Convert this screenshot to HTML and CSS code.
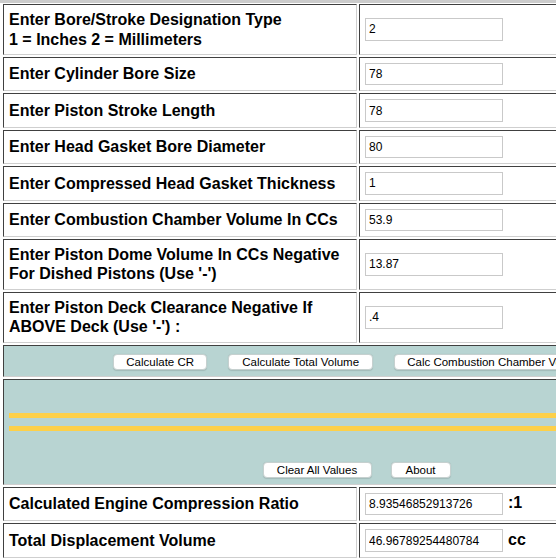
FILE: index.html
```html
<!DOCTYPE html>
<html>
<head>
<meta charset="utf-8">
<title>Compression Ratio Calculator</title>
<link rel="stylesheet" href="styles.css">
</head>
<body>
<div class="top-strip"></div>
<form class="calc">
  <div class="cell label">Enter Bore/Stroke Designation Type<br>1 = Inches 2 = Millimeters</div>
  <div class="cell field"><input class="box" type="text" value="2"></div>

  <div class="cell label">Enter Cylinder Bore Size</div>
  <div class="cell field"><input class="box" type="text" value="78"></div>

  <div class="cell label">Enter Piston Stroke Length</div>
  <div class="cell field"><input class="box" type="text" value="78"></div>

  <div class="cell label">Enter Head Gasket Bore Diameter</div>
  <div class="cell field"><input class="box" type="text" value="80"></div>

  <div class="cell label">Enter Compressed Head Gasket Thickness</div>
  <div class="cell field"><input class="box" type="text" value="1"></div>

  <div class="cell label">Enter Combustion Chamber Volume In CCs</div>
  <div class="cell field"><input class="box" type="text" value="53.9"></div>

  <div class="cell label">Enter Piston Dome Volume In CCs Negative<br>For Dished Pistons (Use '-')</div>
  <div class="cell field"><input class="box" type="text" value="13.87"></div>

  <div class="cell label">Enter Piston Deck Clearance Negative If<br>ABOVE Deck (Use '-') :</div>
  <div class="cell field"><input class="box" type="text" value=".4"></div>

  <div class="cell actions actions-top">
    <div class="btn-row wide-gap">
      <button type="button" class="btn btn-cr">Calculate CR</button>
      <button type="button" class="btn btn-total">Calculate Total Volume</button>
      <button type="button" class="btn">Calc Combustion Chamber Volume</button>
    </div>
  </div>

  <div class="cell actions actions-bottom">
    <div class="rule rule-first"></div>
    <div class="rule rule-second"></div>
    <div class="btn-row narrow-gap">
      <button type="button" class="btn btn-clear">Clear All Values</button>
      <button type="button" class="btn btn-about">About</button>
    </div>
  </div>

  <div class="cell label">Calculated Engine Compression Ratio</div>
  <div class="cell field"><input class="box" type="text" value="8.93546852913726"><span class="unit">:1</span></div>

  <div class="cell label">Total Displacement Volume</div>
  <div class="cell field"><input class="box" type="text" value="46.96789254480784"><span class="unit">cc</span></div>
</form>
</body>
</html>
```
FILE: styles.css
```css
html {
  overflow: hidden;
}
body {
  margin: 0;
  background: #ffffff;
  font-family: "Liberation Sans", Arial, sans-serif;
  color: #000000;
}
.top-strip {
  height: 3px;
  background: #cccccc;
}
.calc {
  display: grid;
  grid-template-columns: 354px 351px;
  gap: 2px;
  margin: 1px 0 0 3px;
  width: 707px;
}
.cell {
  box-sizing: border-box;
  border: 1px solid;
  border-color: #404040 #cfcfcf #cfcfcf #404040;
  padding: 5px;
}
.label {
  display: flex;
  align-items: center;
  font-weight: bold;
  font-size: 16px;
  line-height: 19.5px;
}
.field {
  display: flex;
  align-items: center;
}
.box {
  box-sizing: border-box;
  width: 138px;
  height: 22.4px;
  margin: 0;
  padding: 0 3px;
  border: 1px solid #c9c9c9;
  background: #ffffff;
  font-family: "Liberation Sans", Arial, sans-serif;
  font-size: 12px;
  color: #000000;
  outline: none;
}
.unit {
  margin-left: 5px;
  margin-top: -3px;
  font-weight: bold;
  font-size: 16px;
  line-height: 19px;
}
.actions {
  grid-column: 1 / span 2;
  background: #b8d4d2;
}
.actions-top {
  padding: 8px 5px 6px;
}
.actions-bottom {
  display: flex;
  flex-direction: column;
  padding: 33px 5px 6px;
}
.rule {
  height: 5px;
  background: #fdd049;
}
.rule-second {
  margin-top: 8px;
}
.btn-row {
  display: flex;
  justify-content: center;
}
.wide-gap {
  gap: 21px;
}
.narrow-gap {
  gap: 19px;
  margin-top: 31px;
}
.btn {
  box-sizing: border-box;
  height: 16px;
  margin: 0;
  padding: 0 12px;
  border: 1px solid #c6d0cf;
  border-radius: 4px;
  background: #ffffff;
  box-shadow: 0 0.5px 1px rgba(0, 0, 0, 0.12);
  font-family: "Liberation Sans", Arial, sans-serif;
  font-size: 11.5px;
  line-height: 14px;
  color: #000000;
  white-space: nowrap;
}
.btn-cr {
  min-width: 94px;
}
.btn-total {
  min-width: 145px;
}
.btn-clear {
  min-width: 109px;
}
.btn-about {
  min-width: 60px;
}
```
